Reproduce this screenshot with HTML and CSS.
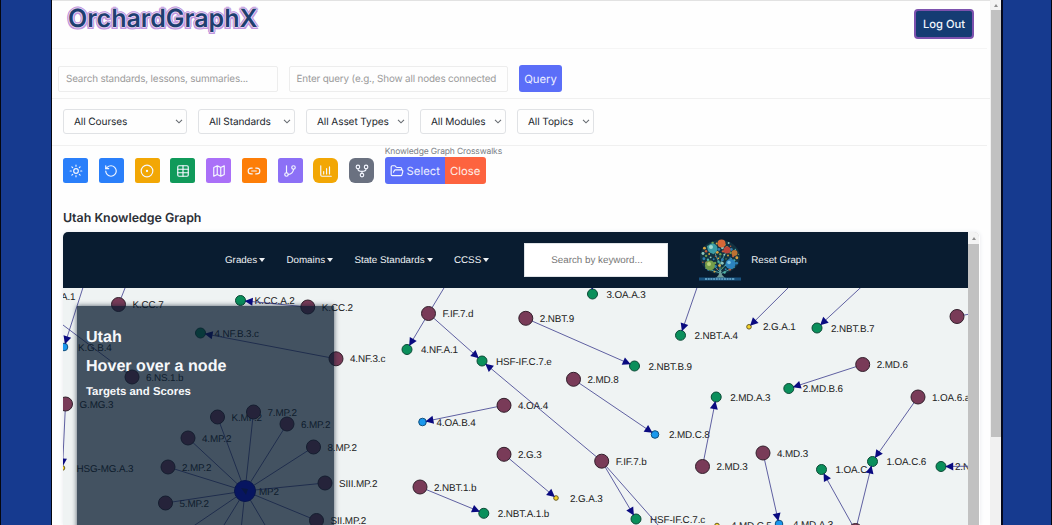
FILE: index.html
```html
<!DOCTYPE html>
<html lang="en">
<head>
<meta charset="utf-8">
<title>OrchardGraphX</title>
<link rel="stylesheet" href="styles.css">
</head>
<body>
<div class="stage">
  <main class="app">
    <header class="top">
      <div class="brand">OrchardGraphX</div>
      <button class="logout">Log Out</button>
    </header>
    <section class="search-row">
      <div class="field"><span class="t-search">Search standards, lessons, summaries...</span></div>
      <div class="field"><span class="t-query">Enter query (e.g., Show all nodes connected</span></div>
      <button class="btn query">Query</button>
    </section>
    <section class="filters">
      <div class="select w-courses"><span>All Courses</span><svg class="chev" viewBox="0 0 8 5"><path d="M1 .8l3 3 3-3"/></svg></div>
      <div class="select w-standards"><span>All Standards</span><svg class="chev" viewBox="0 0 8 5"><path d="M1 .8l3 3 3-3"/></svg></div>
      <div class="select w-assets"><span>All Asset Types</span><svg class="chev" viewBox="0 0 8 5"><path d="M1 .8l3 3 3-3"/></svg></div>
      <div class="select w-modules"><span>All Modules</span><svg class="chev" viewBox="0 0 8 5"><path d="M1 .8l3 3 3-3"/></svg></div>
      <div class="select w-topics"><span>All Topics</span><svg class="chev" viewBox="0 0 8 5"><path d="M1 .8l3 3 3-3"/></svg></div>
    </section>
    <section class="tools">
      <div class="tool blue"><svg viewBox="0 0 24 24"><circle cx="12" cy="12" r="4"/><path d="M12 2v2M12 20v2M4.9 4.9l1.4 1.4M17.7 17.7l1.4 1.4M2 12h2M20 12h2M6.3 17.7l-1.4 1.4M19.1 4.9l-1.4 1.4"/></svg></div>
      <div class="tool blue"><svg viewBox="0 0 24 24"><path d="M3 12a9 9 0 1 0 9-9 9.75 9.75 0 0 0-6.74 2.74L3 8"/><path d="M3 3v5h5"/></svg></div>
      <div class="tool amber"><svg viewBox="0 0 24 24"><circle cx="12" cy="12" r="10"/><circle cx="12" cy="12" r="1"/></svg></div>
      <div class="tool green"><svg viewBox="0 0 24 24"><rect x="3" y="3" width="18" height="18" rx="2"/><path d="M12 3v18M3 9h18M3 15h18"/></svg></div>
      <div class="tool purple"><svg viewBox="0 0 24 24"><path d="M3 6l6-3 6 3 6-3v15l-6 3-6-3-6 3zM9 3v15M15 6v15"/></svg></div>
      <div class="tool orange"><svg viewBox="0 0 24 24"><path d="M9 17H7A5 5 0 0 1 7 7h2M15 7h2a5 5 0 1 1 0 10h-2M8 12h8"/></svg></div>
      <div class="tool violet"><svg viewBox="0 0 24 24"><path d="M6 3v12"/><circle cx="18" cy="6" r="3"/><circle cx="6" cy="18" r="3"/><path d="M18 9a9 9 0 0 1-9 9"/></svg></div>
      <div class="tool amber round"><svg viewBox="0 0 24 24"><path d="M3 3v16a2 2 0 0 0 2 2h16M8 17v-4M13 17V8M18 17V5"/></svg></div>
      <div class="tool gray round"><svg viewBox="0 0 24 24"><circle cx="5" cy="5" r="3"/><circle cx="19" cy="5" r="3"/><circle cx="12" cy="19" r="3"/><path d="M5 8c0 4 3 4.500 7 4.500S19 12 19 8M12 12.500V16"/></svg></div>
      <div class="crosswalk">
        <div class="cw-label">Knowledge Graph Crosswalks</div>
        <div class="cw-buttons">
          <button class="btn sel"><svg viewBox="0 0 24 24"><path d="M6 14l1.500-2.900A2 2 0 0 1 9.240 10H20a2 2 0 0 1 1.940 2.500l-1.540 6a2 2 0 0 1-1.950 1.500H4a2 2 0 0 1-2-2V5a2 2 0 0 1 2-2h3.900a2 2 0 0 1 1.690.9l.81 1.200a2 2 0 0 0 1.670.9H18a2 2 0 0 1 2 2v2"/></svg>Select</button>
          <button class="btn close">Close</button>
        </div>
      </div>
    </section>
    <h2 class="title">Utah Knowledge Graph</h2>
    <section class="frame">
      <div class="frame-main">
        <nav class="nav">
          <div class="menu"><span>Grades</span><i class="caret"></i></div>
          <div class="menu"><span>Domains</span><i class="caret"></i></div>
          <div class="menu"><span>State Standards</span><i class="caret"></i></div>
          <div class="menu last"><span>CCSS</span><i class="caret"></i></div>
          <div class="keyword"><span>Search by keyword...</span></div>
          <svg class="tree" viewBox="0 0 42 42">
            <ellipse cx="21" cy="18" rx="20" ry="17" fill="#123241"/>
            <path d="M21 38V23M21 33L9 21M21 32l12-13M21 26L15 12M21 25l7-14M21 34L6 29M21 35l15-7" stroke="#4d9a9c" stroke-width="1" fill="none"/>
            <g id="leaves"></g>
            <circle cx="13.500" cy="9.500" r="5" fill="#3b9ca6"/><circle cx="12" cy="8" r="2" fill="#a0d8cf"/>
            <circle cx="22.500" cy="4.500" r="4" fill="#d66838"/><circle cx="28" cy="11" r="3.500" fill="#b9453b"/>
            <circle cx="11" cy="26.500" r="5" fill="#759d4a"/><circle cx="10" cy="25" r="2" fill="#b7cf79"/>
            <circle cx="31.500" cy="25" r="5" fill="#2b83be"/><circle cx="30" cy="23.500" r="1.800" fill="#79c3e2"/>
            <circle cx="35.500" cy="14" r="3" fill="#bc7333"/>
            <path d="M16 39q5-2 5-10 1 8 6 10z" fill="#709c98"/>
            <path d="M0 38.500h42v3H0z" fill="#18527f"/><path d="M6 40h30" stroke="#70b2d4" stroke-width="1.300" stroke-dasharray="2 .7"/>
          </svg>
          <span class="reset">Reset Graph</span>
        </nav>
        <div class="canvas">
          <svg class="graph" viewBox="63 288 905 237"></svg>
          <aside class="info">
            <h3>Utah</h3>
            <h3 class="hover">Hover over a node</h3>
            <h4>Targets and Scores</h4>
          </aside>
        </div>
      </div>
      <div class="inner-scroll"><div class="cap"><i class="up"></i></div></div>
    </section>
  </main>
  <div class="scroll"><div class="cap"><i class="up"></i></div><div class="thumb"></div></div>
</div>
<script src="graph.js"></script>
</body>
</html>
```
FILE: styles.css
```css
* { box-sizing: border-box; }
body {
  margin: 0; height: 525px; overflow: hidden;
  background: #163a8f;
  border-left: 1px solid #05070f; border-right: 1px solid #05070f;
  padding: 0 48px 0 50px;
  font-family: Inter, sans-serif; color: #2b2f36;
  text-rendering: geometricPrecision;
}
button { font-family: inherit; border: 0; padding: 0; margin: 0; text-rendering: inherit; }
.stage {
  display: flex; height: 525px; background: #fefefe;
  border-left: 1px solid #05070f; border-right: 2px solid #05081c;
}
.app { flex: 1; min-width: 0; height: 525px; overflow: hidden; border-top: 1px solid #e2e2e2; }

.top {
  height: 48px; margin-right: 3px; padding: 0 4px 0 16px;
  display: flex; justify-content: space-between; align-items: flex-start;
  border-bottom: 1px solid #f5f5f5;
}
.brand {
  font-size: 25px; line-height: 36px; font-weight: 600; color: #1e3f70;
  text-shadow: 1px 0 #e6d2f2, -1px 0 #e6d2f2, 0 1px #e6d2f2, 0 -1px #e6d2f2,
    2px 0 #c096de, -2px 0 #c096de, 0 2px #c096de, 0 -2px #c096de,
    1.500px 1.500px #c096de, -1.500px 1.500px #c096de, 1.500px -1.500px #c096de, -1.500px -1.500px #c096de;
}
.logout {
  width: 60px; height: 30px; margin: 8px 9px 0 0; border: 2px solid #7d52ae; border-radius: 4px;
  background: #153c73; color: #f2f6fb; font-size: 11.200px; font-weight: 500;
}

.search-row {
  height: 50px; padding: 16px 6px 0; display: flex; gap: 11px; align-items: flex-start;
  border-bottom: 1px solid #f0f0f0;
}
.field {
  width: 219.500px; height: 26px; margin-top: 1px; padding: 0 7px; display: flex; align-items: center;
  border: 1px solid #ededed; border-radius: 2px; color: #9a9a9a; font-size: 9.900px; letter-spacing: -.16px; white-space: nowrap;
}
.btn { height: 27px; background: #5b6ef8; color: #eef0ff; font-size: 11.300px; }
.query { width: 43px; border-radius: 3px; }

.filters {
  height: 47px; margin-right: 3px; padding: 10px 11px 0; display: flex; gap: 11px; align-items: flex-start;
  border-bottom: 1px solid #f0f0f0;
}
.select {
  height: 25px; padding: 0 3px 0 10px; display: flex; align-items: center; justify-content: space-between;
  border: 1px solid #e0e2e5; border-radius: 3px; font-size: 10.100px; letter-spacing: -.1px; color: #24282e; white-space: nowrap;
}
.w-courses { width: 124px; }
.w-standards { width: 97px; }
.w-assets { width: 103px; }
.w-modules { width: 86px; }
.w-topics { width: 77px; }
.chev { width: 8px; height: 5px; fill: none; stroke: #666b71; stroke-width: 1.100; }

.tools { height: 60px; padding: 0 11px; display: flex; gap: 10.750px; align-items: flex-start; }
.tool {
  width: 25px; height: 25px; margin-top: 12px; border-radius: 2.500px;
  display: flex; align-items: center; justify-content: center;
}
.tool svg, .sel svg { width: 14px; height: 14px; fill: none; stroke: #f4f7ff; stroke-width: 2; stroke-linecap: round; stroke-linejoin: round; }
.round { border-radius: 6px; }
.blue { background: #2a7ffa; }
.amber { background: #f2a705; }
.green { background: #109a5a; }
.purple { background: #aa70f8; }
.orange { background: #fd7e08; }
.violet { background: #8c70f6; }
.gray { background: #6a7180; }
.crosswalk { margin-left: 0; }
.cw-label { height: 11px; line-height: 13px; font-size: 8.500px; letter-spacing: -.13px; color: #7b7f86; white-space: nowrap; }
.cw-buttons { display: flex; }
.sel { width: 60px; display: flex; align-items: center; justify-content: center; gap: 3px; border-radius: 3px 0 0 3px; }
.close { width: 41px; background: #fd633f; color: #fff0ea; border-radius: 0 3px 3px 0; }
.title { margin: 0 0 0 11px; height: 26px; line-height: 23px; font-size: 12.400px; font-weight: 600; }

.frame { margin-left: 11px; width: 917px; height: 293px; display: flex; border-radius: 5px 5px 0 0; overflow: hidden; box-shadow: 0 0 4px #e8e9ee; }
.frame-main { width: 905px; font-family: "Liberation Sans", Arial, sans-serif; }
.nav { height: 56px; padding-left: 162px; background: #091c30; color: #eef1f4; display: flex; align-items: center; font-size: 9.800px; }
.menu { display: flex; align-items: center; gap: 2px; margin-right: 21.300px; white-space: nowrap; }
.menu.last { margin-right: 35px; }
.caret { border: 3.500px solid transparent; border-top: 4px solid #eef1f4; border-bottom: 0; }
.keyword { width: 144px; height: 34px; padding-left: 26px; background: #fff; border: 1px solid #dfe3e6; color: #777; display: flex; align-items: center; white-space: nowrap; }
.tree { width: 42px; height: 42px; margin-left: 31px; }
.reset { margin-left: 10px; white-space: nowrap; }

.canvas { position: relative; height: 237px; background: #eff3f3; overflow: hidden; }
.graph { display: block; width: 905px; height: 237px; font-size: 9.900px; letter-spacing: -.12px; }
.graph text { fill: #222; }
.graph line { stroke: #3a3a8c; stroke-width: .8; }
.arrow { fill: #0a0a80; }
.major { fill: #793b58; stroke: #33202c; }
.standard { fill: #0a8f5b; stroke: #0b4a36; }
.cluster { fill: #1a98ee; stroke: #11507d; }
.leaf { fill: #f5d32a; stroke: #6a5c20; }
.hub { fill: #0000f0; stroke: #0000a0; }
.info {
  position: absolute; left: 14px; top: 18px; width: 257px; height: 260px; padding: 20px 9px;
  background: rgba(10, 28, 48, .75); box-shadow: 0 0 5px rgba(10, 28, 48, .7); color: #f6f8fa;
}
.info h3 { margin: 0 0 7px; font-size: 16.100px; line-height: 22px; }
.info h4 { margin: 0; font-size: 11.400px; line-height: 16px; }

.inner-scroll { width: 11px; background: #c1c1c1; border-radius: 0 5px 0 0; overflow: hidden; }
.scroll { width: 11px; background: #f1f1f1; padding-left: 1px; }
.scroll .thumb { height: 427px; background: #c1c1c1; }
.cap { height: 10px; background: #f3f3f3; display: flex; align-items: center; justify-content: center; }
.inner-scroll .cap { height: 12px; }
.up { border: 2.500px solid transparent; border-bottom: 3px solid #8d8d8d; border-top: 0; }
```
FILE: graph.js
```js
const svg = document.querySelector('.graph');
const radius = { major: 7, standard: 5, cluster: 3.8, leaf: 2.3, hub: 10.5 };

// id: [x, y, kind, label]
const nodes = {
  kgb4: [64, 347, 'cluster', 'K.G.B.4'], kcc7: [118.5, 304.5, 'major', 'K.CC.7'],
  kcca2: [240.5, 300.5, 'standard', 'K.CC.A.2'], kcc2: [307.800, 307, 'major', 'K.CC.2'],
  nfb3c: [200.5, 333, 'standard', '4.NF.B.3.c'], nf3c: [336, 358.800, 'major', '4.NF.3.c'],
  ns1b: [132, 377, 'major', '6.NS.1.b'], gmg3: [65.5, 404, 'major', 'G.MG.3'],
  hsg: [62.5, 468, 'leaf', 'HSG-MG.A.3'],
  kmp: [217.5, 417, 'major', 'K.MP.2'], mp7: [253.5, 412, 'major', '7.MP.2'],
  mp6: [287, 424, 'major', '6.MP.2'], mp4: [188, 438, 'major', '4.MP.2'],
  mp8: [313.5, 447, 'major', '8.MP.2'], mp2: [168, 467, 'major', '2.MP.2'],
  mp3s: [325, 483, 'major', 'SIII.MP.2'], mp5: [165.5, 503, 'major', '5.MP.2'],
  mp2s: [316.5, 520.5, 'major', 'SII.MP.2'], hub: [245, 491, 'hub', 'MP2'],
  fif7d: [428.5, 313.5, 'major', 'F.IF.7.d'], nfa1: [407, 349.5, 'standard', '4.NF.A.1'],
  hsf7e: [482, 361, 'standard', 'HSF-IF.C.7.e'], nbt9: [525.800, 318.300, 'major', '2.NBT.9'],
  nbtb9: [634.5, 366, 'standard', '2.NBT.B.9'], oaa3: [592.5, 294, 'standard', '3.OA.A.3'],
  md8: [573.5, 379.300, 'major', '2.MD.8'], mdc8: [655, 434.5, 'cluster', '2.MD.C.8'],
  oa4: [504, 405.300, 'major', '4.OA.4'], oab4: [422.5, 422, 'cluster', '4.OA.B.4'],
  g3: [504, 454.300, 'major', '2.G.3'], ga3: [556, 498, 'leaf', '2.G.A.3'],
  nbt1b: [420, 487, 'major', '2.NBT.1.b'], nbta1b: [483.800, 513.300, 'standard', '2.NBT.A.1.b'],
  nbta4: [680.5, 335.300, 'standard', '2.NBT.A.4'], ga1: [749, 326.800, 'leaf', '2.G.A.1'],
  nbtb7: [817, 328, 'standard', '2.NBT.B.7'], right: [957, 316.5, 'major', ''],
  md6: [862.700, 364.500, 'major', '2.MD.6'], mdb6: [788.800, 388.500, 'standard', '2.MD.B.6'],
  md3: [702.5, 466.5, 'major', '2.MD.3'], mda3: [716.200, 397, 'standard', '2.MD.A.3'],
  fif7b: [601.700, 461.200, 'major', 'F.IF.7.b'], hsf7c: [636, 519, 'standard', 'HSF-IF.C.7.c'],
  md43: [763, 453, 'major', '4.MD.3'], mda43: [779, 524, 'cluster', '4.MD.A.3'],
  mdc5: [717, 525.5, 'leaf', '4.MD.C.5'], oac: [821.5, 469.5, 'standard', '1.OA.C'],
  oac6: [872.5, 461.5, 'standard', '1.OA.C.6'], oa6a: [918, 397, 'major', '1.OA.6.a'],
  low: [855.5, 530.500, 'major', ''], nbtr: [941, 466.5, 'standard', '2.NBT']
};

// [source, target, arrow]; a source may be a point outside the view
const links = [
  [[86, 278], 'kgb4', 1], [[129, 278], 'kcc7', 0], ['kcc2', 'kcca2', 1], ['nf3c', 'nfb3c', 1],
  [[63, 325], 'ns1b', 0], ['gmg3', 'hsg', 1],
  ['kmp', 'hub', 0], ['mp7', 'hub', 0], ['mp6', 'hub', 0], ['mp4', 'hub', 0], ['mp8', 'hub', 0],
  ['mp2', 'hub', 0], ['mp3s', 'hub', 0], ['mp5', 'hub', 0], ['mp2s', 'hub', 0],
  [[170, 542], 'hub', 0], [[203, 559], 'hub', 0], [[238, 560], 'hub', 0], [[285, 559], 'hub', 0],
  [[450, 278], 'fif7d', 0], ['fif7d', 'nfa1', 1], ['fif7d', 'hsf7e', 1], ['fif7b', 'hsf7e', 1],
  ['fif7b', 'hsf7c', 1], [[690, 561], 'fif7b', 0], ['nbt9', 'nbtb9', 1], [[591, 270], 'oaa3', 1],
  ['md8', 'mdc8', 1], ['oa4', 'oab4', 1], ['g3', 'ga3', 1], ['nbt1b', 'nbta1b', 1],
  [[700, 279], 'nbta4', 1], [[798, 278], 'ga1', 1], [[871, 278], 'nbtb7', 1],
  [[980, 312], 'right', 0], ['md6', 'mdb6', 1], ['md3', 'mda3', 1], ['md43', 'mda43', 1],
  ['oa6a', 'oac6', 1], ['low', 'oac', 1], ['low', 'oac6', 1], [[990, 466], 'nbtr', 1]
];

function add(parent, tag, attrs, text) {
  const el = document.createElementNS('http://www.w3.org/2000/svg', tag);
  for (const key in attrs) el.setAttribute(key, attrs[key]);
  if (text) el.textContent = text;
  parent.appendChild(el);
}

for (const id in nodes) {
  const [x, y, , label] = nodes[id];
  if (label) add(svg, 'text', { x: x + 14, y: y + 3.5 }, label);
}
add(svg, 'text', { x: 61, y: 299.5 }, 'A.1');

for (const [from, to] of links) {
  const a = Array.isArray(from) ? from : nodes[from];
  const b = nodes[to];
  add(svg, 'line', { x1: a[0], y1: a[1], x2: b[0], y2: b[1] });
}
for (const id in nodes) {
  const [x, y, kind] = nodes[id];
  add(svg, 'circle', { cx: x, cy: y, r: radius[kind], class: kind });
}
for (const [from, to, arrow] of links) {
  if (!arrow) continue;
  const a = Array.isArray(from) ? from : nodes[from];
  const b = nodes[to];
  const angle = Math.atan2(b[1] - a[1], b[0] - a[0]) * 180 / Math.PI;
  add(svg, 'path', {
    class: 'arrow', d: 'M0 0L-8 4V-4Z',
    transform: `translate(${b[0]} ${b[1]}) rotate(${angle}) translate(${-radius[b[2]] + 0.8} 0)`
  });
}
add(svg, 'path', { class: 'arrow', d: 'M241 488l7 1-2 6z' });

// small fruit on the tree logo
const leaves = document.getElementById('leaves');
const tints = ['#4fb3a5', '#d9a441', '#6f9f4b', '#2f7fb0', '#c65b3a', '#8fc7bd'];
for (let i = 0; i < 70; i++) {
  const t = i * 2.4, d = Math.sqrt(i / 70);
  add(leaves, 'circle', {
    cx: 21 + Math.cos(t) * d * 19, cy: 18 + Math.sin(t) * d * 16.5,
    r: 0.7 + (i % 4) * 0.25, fill: tints[i % 6]
  });
}
```
